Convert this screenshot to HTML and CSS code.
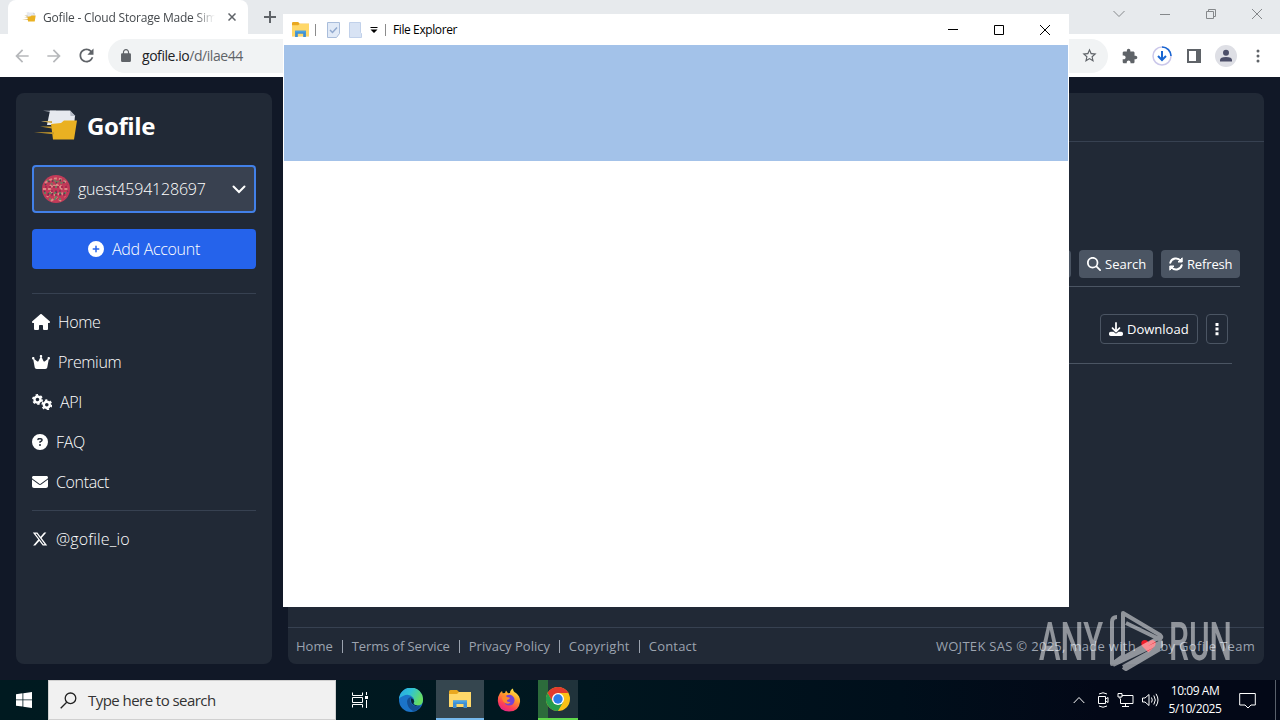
FILE: index.html
```html
<!DOCTYPE html>
<html lang="en">
<head>
    <meta charset="UTF-8">
    <meta name="viewport" content="width=device-width, initial-scale=1.0">
    <title>Gofile - Cloud Storage Made Simple</title>
    <link rel="stylesheet" href="styles.css">
</head>
<body>
    <svg class="defs" width="0" height="0">
        <symbol id="gofile" viewBox="0 0 44 30">
            <path d="M9 .8h13v1.600zM7 11.300h10v1.400z" fill="#d8dce4"/>
            <path d="M16 .500h20l5 5.500-1 9H13z" fill="#e6e9ef"/>
            <path d="M36 .500l5.500 5.500h-5z" fill="#b4bac5"/>
            <path d="M17 14l10-1 3-2.500h13l-3 19H19z" fill="#eab122"/>
            <path d="M6 16.500h12v2zM0 22.300h20v2zM7 11.300h11v1.800z" fill="#c99b2a"/>
        </symbol>
        <symbol id="folder" viewBox="0 0 22 18">
            <path d="M0 1.500Q0 0 1.500 0H8l2 2h12v15H0z" fill="#e9a820"/>
            <path d="M0 4h8l2-2h12v15H0z" fill="#ffd869"/>
            <path d="M4 10.500h14V18h-3.500v-4h-7v4H4z" fill="#3f8fd2"/>
            <path d="M4 10.500h14v2H4z" fill="#4aa3e4"/>
        </symbol>
    </svg>
    <div class="desktop">
        <div class="tab-strip">
            <div class="tab">
                <svg class="favicon" width="14" height="10"><use href="#gofile"/></svg>
                <span class="tab-title">Gofile - Cloud Storage Made Simple</span>
                <svg class="tab-close" width="8" height="8" viewBox="0 0 8 8"><path d="M.5.5l7 7m0-7l-7 7" stroke="#5f6368" stroke-width="1.500"/></svg>
            </div>
            <svg class="new-tab" width="12" height="12" viewBox="0 0 12 12"><path d="M6 0v12M0 6h12" stroke="#5f6368" stroke-width="2"/></svg>
            <div class="window-buttons">
                <svg width="12" height="12" viewBox="0 0 12 12"><path d="M.5 3L6 8.500 11.500 3"/></svg>
                <svg width="12" height="12" viewBox="0 0 12 12"><path d="M1 6.500h10"/></svg>
                <svg width="12" height="12" viewBox="0 0 12 12"><path d="M1.500 3.500h7v7h-7zM3.500 3V1.500h7v7H9"/></svg>
                <svg width="12" height="12" viewBox="0 0 12 12"><path d="M1 1l10 10m0-10L1 11"/></svg>
            </div>
        </div>
        <div class="toolbar">
            <svg class="nav-arrow" width="20" height="20" viewBox="0 0 24 24"><path d="M20 11H7.830l5.590-5.590L12 4l-8 8 8 8 1.410-1.410L7.830 13H20z"/></svg>
            <svg class="nav-arrow" width="20" height="20" viewBox="0 0 24 24"><path d="M4 11h12.170l-5.590-5.590L12 4l8 8-8 8-1.410-1.410L16.170 13H4z"/></svg>
            <svg class="reload" width="21" height="21" viewBox="0 0 24 24"><path d="M17.650 6.350C16.200 4.900 14.210 4 12 4c-4.420 0-7.990 3.580-7.990 8s3.570 8 7.990 8c3.730 0 6.840-2.550 7.730-6h-2.080c-.82 2.330-3.040 4-5.650 4-3.310 0-6-2.690-6-6s2.690-6 6-6c1.660 0 3.140.69 4.220 1.780L13 11h7V4l-2.350 2.350z"/></svg>
            <div class="omnibox">
                <svg width="12" height="13" viewBox="3 1 18 21"><path d="M18 8h-1V6c0-2.760-2.240-5-5-5S7 3.240 7 6v2H6c-1.100 0-2 .9-2 2v10c0 1.100.9 2 2 2h12c1.100 0 2-.9 2-2V10c0-1.100-.9-2-2-2zm-2.900 0H8.900V6c0-1.710 1.390-3.100 3.100-3.100s3.100 1.390 3.100 3.100z"/></svg>
                <span class="url"><b>gofile.io</b>/d/ilae44</span>
                <svg class="star" width="17" height="17" viewBox="0 0 24 24"><path d="M22 9.240l-7.190-.62L12 2 9.190 8.630 2 9.240l5.460 4.730L5.820 21 12 17.270 18.180 21l-1.630-7.030zM12 15.400l-3.760 2.270 1-4.280-3.320-2.880 4.380-.38L12 6.100l1.710 4.040 4.380.38-3.320 2.880 1 4.280z"/></svg>
            </div>
            <div class="actions">
                <svg width="16" height="16" viewBox="1 0 23 23"><path d="M20.500 11H19V7c0-1.100-.9-2-2-2h-4V3.500C13 2.120 11.880 1 10.500 1S8 2.120 8 3.500V5H4c-1.100 0-1.990.9-1.990 2v3.800H3.500c1.490 0 2.700 1.210 2.700 2.700s-1.210 2.700-2.700 2.700H2V20c0 1.100.9 2 2 2h3.800v-1.500c0-1.490 1.210-2.700 2.700-2.700s2.700 1.210 2.700 2.700V22H17c1.100 0 2-.9 2-2v-4h1.500c1.380 0 2.500-1.120 2.500-2.500S21.880 11 20.500 11z"/></svg>
                <svg width="20" height="20" viewBox="0 0 20 20" fill="none" stroke="#1967d2" stroke-width="2"><circle cx="10" cy="10" r="9" stroke="#cbc8ea" stroke-width="1.500"/><path d="M10 1a9 9 0 0 1 9 9" stroke-width="1.600"/><path d="M10 5v9M6 10l4 4 4-4"/></svg>
                <svg width="14" height="14" viewBox="0 0 14 14"><path d="M0 0h14v14H0zM2 2v10h7V2z" fill-rule="evenodd"/></svg>
                <svg width="22" height="22" viewBox="0 0 22 22"><circle cx="11" cy="11" r="11" fill="#dedfe5"/><circle cx="11" cy="7.800" r="3" fill="#4c4f69"/><path d="M5 16.500v-1.500q0-3 6-3t6 3v1.500z" fill="#4c4f69"/></svg>
                <svg width="4" height="14" viewBox="0 0 4 14"><circle cx="2" cy="2" r="1.500"/><circle cx="2" cy="7" r="1.500"/><circle cx="2" cy="12" r="1.500"/></svg>
            </div>
        </div>

        <div class="page">
            <aside class="sidebar">
                <div class="logo">
                    <svg width="44" height="30"><use href="#gofile"/></svg>
                    <span>Gofile</span>
                </div>
                <div class="account">
                    <svg width="28" height="28" viewBox="0 0 28 28">
                        <circle cx="14" cy="14" r="14" fill="#c23a58"/>
                        <g fill="none" stroke="#d98a84" stroke-width="2" stroke-dasharray="3 2"><path d="M3 8q11-9 22 0M1 14h7l6-5 6 5h7M5 22l4-5 5 4 5-4 4 5"/><path d="M8 10l3 3 3-4 3 4 3-3M9 26l5-4 5 4"/></g>
                        <g fill="none" stroke="#6d7f60" stroke-width="1.800" stroke-dasharray="2 3"><path d="M5 5l5 4 4-5 4 5 5-4M2 18h24M7 24h14"/><path d="M14 6v18"/></g>
                        <g fill="none" stroke="#a92a50" stroke-width="2" stroke-dasharray="2 2"><path d="M3 12h22M5 20h18M9 16h10"/></g>
                        <g fill="none" stroke="#4c4550" stroke-width="1.500" stroke-dasharray="1.500 3"><path d="M3 10l6-5 5 3 5-3 6 5M2 16l6 4 6-3 6 3 6-4"/></g>
                    </svg>
                    <span>guest4594128697</span>
                    <svg class="chevron" width="14" height="14" viewBox="0 0 14 14"><path d="M1.500 4.500L7 10l5.500-5.500" fill="none" stroke="#fff" stroke-width="2" stroke-linecap="round"/></svg>
                </div>
                <div class="add-account">
                    <svg width="16" height="16" viewBox="0 0 512 512"><path d="M256 512A256 256 0 1 0 256 0a256 256 0 1 0 0 512zM232 344V280H168c-13.300 0-24-10.700-24-24s10.700-24 24-24h64V168c0-13.300 10.700-24 24-24s24 10.700 24 24v64h64c13.300 0 24 10.700 24 24s-10.700 24-24 24H280v64c0 13.300-10.700 24-24 24s-24-10.700-24-24z"/></svg>
                    <span>Add Account</span>
                </div>
                <nav class="menu">
                    <a><svg width="18" height="16" viewBox="0 0 576 512"><path d="M575.800 255.500c0 18-15 32.100-32 32.100h-32l.7 160.200V472c0 22.100-17.900 40-40 40H392c-22.100 0-40-17.900-40-40V384c0-17.700-14.300-32-32-32H256c-17.700 0-32 14.300-32 32v88c0 22.100-17.900 40-40 40H104c-22.100 0-40-17.900-40-40V287.600H32c-18 0-32-14-32-32.100c0-9 3-17 10-24L266.400 8c7-7 15-8 22-8s15 2 21 7L564.800 231.500c8 7 12 15 11 24z"/></svg><span>Home</span></a>
                    <a><svg width="18" height="16" viewBox="0 0 576 512"><path d="M309 106c11.400-7 19-19.700 19-34c0-22.100-17.900-40-40-40s-40 17.900-40 40c0 14.400 7.600 27 19 34L209.700 220.600c-9.100 18.200-32.700 23.400-48.600 10.700L72 160c5-6.700 8-15 8-24c0-22.100-17.900-40-40-40S0 113.900 0 136s17.900 40 40 40h.7L86.400 427.400c5.500 30.400 32 52.600 63 52.600H426.600c30.900 0 57.400-22.100 63-52.600L535.300 176h.7c22.100 0 40-17.900 40-40s-17.900-40-40-40s-40 17.900-40 40c0 9 3 17.300 8 24l-89.100 71.300c-15.900 12.700-39.500 7.500-48.600-10.700z"/></svg><span>Premium</span></a>
                    <a><svg width="20" height="16" viewBox="0 0 20 16"><g fill="none" stroke="#fff"><circle cx="5.500" cy="5.500" r="3" stroke-width="2.400"/><circle cx="5.500" cy="5.500" r="4.600" stroke-width="1.700" stroke-dasharray="2.400 2.417"/><circle cx="14.800" cy="10.800" r="3" stroke-width="2.400"/><circle cx="14.800" cy="10.800" r="4.600" stroke-width="1.700" stroke-dasharray="2.400 2.417"/></g></svg><span>API</span></a>
                    <a><svg width="16" height="16" viewBox="0 0 512 512"><path d="M256 512A256 256 0 1 0 256 0a256 256 0 1 0 0 512zM169.800 165.300c7.900-22.300 29.100-37.300 52.800-37.300h58.300c34.900 0 63.100 28.300 63.100 63.100c0 22.600-12.100 43.500-31.700 54.800L280 264.400c-.2 13-10.900 23.600-24 23.600c-13.300 0-24-10.700-24-24V250.500c0-8.600 4.600-16.500 12.100-20.800l44.300-25.400c4.700-2.700 7.600-7.700 7.600-13.100c0-8.400-6.800-15.100-15.100-15.100H222.600c-3.400 0-6.400 2.100-7.500 5.300l-.4 1.200c-4.400 12.500-18.200 19-30.600 14.600s-19-18.200-14.600-30.600zM224 352a32 32 0 1 1 64 0 32 32 0 1 1 -64 0z"/></svg><span>FAQ</span></a>
                    <a><svg width="16" height="16" viewBox="0 0 512 512"><path d="M48 64C21.500 64 0 85.500 0 112c0 15.100 7.100 29.300 19.200 38.400L236.800 313.600c11.400 8.500 27 8.500 38.400 0L492.800 150.400c12.100-9.100 19.200-23.300 19.200-38.400c0-26.500-21.500-48-48-48zM0 176V384c0 35.300 28.700 64 64 64H448c35.300 0 64-28.700 64-64V176L294.400 339.200c-22.800 17.100-54 17.100-76.800 0z"/></svg><span>Contact</span></a>
                </nav>
                <a class="social"><svg width="16" height="16" viewBox="0 0 512 512"><path d="M389.200 48h70.600L305.600 224.200 487 464H345L233.700 318.600 106.500 464H35.800L200.700 275.500 26.800 48H172.400L272.900 180.900zM364.400 421.800h39.100L151.100 88h-42z"/></svg><span>@gofile_io</span></a>
            </aside>

            <main class="content">
                <div class="content-header"></div>
                <div class="files">
                    <div class="file-actions">
                        <button class="btn"></button>
                        <button class="btn search-btn"><svg width="14" height="14" viewBox="0 0 512 512"><path d="M416 208c0 45.900-14.900 88.300-40 122.700L502.600 457.400c12.500 12.500 12.500 32.800 0 45.300s-32.800 12.500-45.300 0L330.700 376c-34.400 25.200-76.800 40-122.700 40C93.100 416 0 322.900 0 208S93.100 0 208 0S416 93.100 416 208zM208 352a144 144 0 1 0 0-288 144 144 0 1 0 0 288z"/></svg><span>Search</span></button>
                        <button class="btn refresh-btn"><svg width="14" height="14" viewBox="0 0 14 14"><g fill="none" stroke="#fff" stroke-width="1.900" stroke-linecap="round" stroke-linejoin="round"><path d="M1.300 5.800A5.800 5.800 0 0 1 11.700 4M12.700 8.200A5.800 5.800 0 0 1 2.300 10"/><path d="M13.200 1.200V5H9.400zM.8 12.800V9h3.800z" fill="#fff" stroke-width="1"/></g></svg><span>Refresh</span></button>
                    </div>
                    <div class="file-row">
                        <button class="btn outline download-btn"><svg width="14" height="14" viewBox="0 0 512 512"><path d="M288 32c0-17.700-14.300-32-32-32s-32 14.300-32 32V274.700l-73.400-73.400c-12.500-12.500-32.800-12.500-45.300 0s-12.500 32.800 0 45.300l128 128c12.500 12.500 32.800 12.500 45.300 0l128-128c12.500-12.500 12.500-32.800 0-45.300s-32.800-12.500-45.300 0L288 274.700zM64 352c-35.300 0-64 28.700-64 64v32c0 35.300 28.700 64 64 64H448c35.300 0 64-28.700 64-64V416c0-35.300-28.700-64-64-64H346.500l-45.300 45.300c-25 25-65.500 25-90.500 0L165.500 352z"/></svg><span>Download</span></button>
                        <button class="btn outline more-btn"><svg width="4" height="14" viewBox="0 0 4 14"><path d="M.5 1h3v3h-3zM.5 5.600h3v3h-3zM.5 10.200h3v3h-3z"/></svg></button>
                    </div>
                </div>
                <footer class="footer">
                    <span class="f-home">Home</span><i></i><span class="f-terms">Terms of Service</span><i></i><span class="f-privacy">Privacy Policy</span><i></i><span class="f-copy">Copyright</span><i></i><span>Contact</span>
                    <span class="credits">WOJTEK SAS © 2025, made with <svg width="17" height="14" viewBox="0 0 16 14"><path d="M8 13.500L1.500 7Q-.5 2.500 3 1.200 6.500.500 8 3.500 10 .500 13 1.200q3.500 1.300 1.500 5.800z" fill="#f01c28"/></svg> by Gofile Team</span>
                </footer>
            </main>
        </div>

        <div class="taskbar">
            <div class="start"><svg width="16" height="16" viewBox="0 0 16 16"><path d="M0 2.200L6.500 1.300v6.200H0zM7.300 1.200L16 0v7.500H7.300zM0 8.300h6.500v6.300L0 13.700zM7.300 8.300H16V16l-8.700-1.200z" fill="#fff"/></svg></div>
            <div class="search-box">
                <svg width="17" height="17" viewBox="0 0 17 17"><g fill="none" stroke="#222" stroke-width="1.300"><circle cx="10.500" cy="6.300" r="5.300"/><path d="M6.700 10.200L.7 16.200"/></g></svg>
                <span>Type here to search</span>
            </div>
            <div class="task"><svg width="18" height="16" viewBox="0 0 18 16"><path d="M1.500.5v3h10v-3M1.500 15.500v-3h10v3M1.500 5.500h10v5h-10zM15.500 0v3M15.500 8v8" fill="none" stroke="#fff"/><path d="M14 4h3v3h-3z" fill="#fff"/></svg></div>
            <div class="task edge"><svg width="24" height="24" viewBox="0 0 24 24">
                <defs><linearGradient id="eg" x1="0" y1="0" x2="1" y2=".4"><stop offset="0" stop-color="#2aa4e4"/><stop offset=".5" stop-color="#2fc3d6"/><stop offset="1" stop-color="#66dd62"/></linearGradient></defs>
                <circle cx="12" cy="12" r="12" fill="#1b74c9"/>
                <path d="M0 11A12 12 0 0 1 24 12q0 5-5 5.500-5 0-4.500-3Q16 12 14 9.500 10 5 4 8 1 9 0 11z" fill="url(#eg)"/>
                <path d="M8 13q1-4 5-4-3 2-1 6 3 5 10 2.500Q19 23 14 23q-6-3-6-10z" fill="#144f93"/>
                <path d="M12.500 10q-1.500 2 0 5 3 4 8.500 2.800-5 0-6.500-2 0-1 .8-2 0-2.500-2.800-3.800z" fill="#072537"/>
            </svg></div>
            <div class="task active"><svg width="22" height="18"><use href="#folder"/></svg></div>
            <div class="task firefox"><svg width="24" height="24" viewBox="0 0 24 24">
                <defs><linearGradient id="ff" x1=".8" y1="0" x2=".3" y2="1"><stop offset="0" stop-color="#fff14a"/><stop offset=".4" stop-color="#ff9a29"/><stop offset=".75" stop-color="#ff4055"/><stop offset="1" stop-color="#e3248a"/></linearGradient></defs>
                <path d="M3 5l2-2 .7 2.300L8 5l1-2.500 2 2.700 2-.2Q13 2 16 .500q0 3 3 4.500 4.500 3.500 4 9Q22 23.500 12 23.500 1.500 23 .8 13 .8 8 3 5z" fill="url(#ff)"/>
                <path d="M8 9q2-3 6-2 4 2 3.500 6-1 4.500-5.500 4.500-4 0-5-4.500z" fill="#7542d5"/>
                <path d="M5 9q3-2.500 5 0l3 .8q-.5 2-3 2.200-.5 2.500 3.500 2-1.500 3-5.500 1Q5 13 5 9z" fill="#ff8a2b"/>
            </svg></div>
            <div class="task chrome"><svg width="24" height="24" viewBox="0 0 24 24">
                <circle cx="12" cy="12" r="12" fill="#fbc116"/>
                <path d="M1.600 6A12 12 0 0 1 22.400 6H12L6.800 15z" fill="#e33b2e"/>
                <path d="M1.600 6A12 12 0 0 0 12 24l5.200-9H6.800z" fill="#269c4b"/>
                <circle cx="12" cy="12" r="6" fill="#fff"/><circle cx="12" cy="12" r="4.700" fill="#2b7de9"/>
            </svg></div>
            <div class="tray">
                <svg width="12" height="8" viewBox="0 0 12 8"><path d="M.7 7L6 1.500 11.300 7"/></svg>
                <svg width="12" height="16" viewBox="0 0 12 16"><path d="M1.500 4.500h7v7h-7zM8.500 7l2.500-1.500v5L8.500 9M2 2q4-2.500 8 0M2 14q4 2.500 8 0"/></svg>
                <svg width="17" height="14" viewBox="0 0 17 14"><path d="M5 2.500h11v8H3.500V6M8.500 10.500v3M5 13.500h7M1 .5h4v3.500H1zM3 4v2"/></svg>
                <svg width="17" height="14" viewBox="0 0 17 14"><path d="M.5 5v4h2.500L7 12.500v-11L3 5zM9.500 4.500q1.500 2.500 0 5M11.800 2.500q3 4.500 0 9M14 .8q4 6.200 0 12.400"/></svg>
                <div class="clock"><span>10:09 AM</span><span>5/10/2025</span></div>
                <svg class="notice" width="17" height="17" viewBox="0 0 17 17"><path d="M.7 1.500h15.600v11.500h-4.300L9 16l-3-3H.7z"/></svg>
            </div>
        </div>

        <div class="explorer">
            <div class="titlebar">
                <svg class="ex-folder" width="17" height="15" viewBox="0 0 22 18" preserveAspectRatio="none"><use href="#folder"/></svg>
                <span class="sep"></span>
                <svg class="ex-check" width="13" height="16" viewBox="0 0 13 16"><path d="M.5.5h12v11l-3 4h-9z" fill="#e1eaf7" stroke="#a9bddb"/><path d="M3 8l2.500 2.500L10 5.500" fill="none" stroke="#91a9cf" stroke-width="1.500"/></svg>
                <svg class="ex-page" width="13" height="16" viewBox="0 0 13 16"><path d="M.5.5h11v10l1 1v4H.5z" fill="#d8e3f4" stroke="#c1d1ea"/></svg>
                <svg class="ex-drop" width="8" height="6" viewBox="0 0 8 6"><path d="M.5 0h7v1h-7zM.5 2.500h7L4 6z"/></svg>
                <span class="sep"></span>
                <span class="ex-title">File Explorer</span>
                <div class="ex-buttons">
                    <svg width="10" height="10" viewBox="0 0 10 10"><path d="M0 4.500h10"/></svg>
                    <svg width="10" height="10" viewBox="0 0 10 10"><path d="M.5.5h9v9h-9z"/></svg>
                    <svg width="10" height="10" viewBox="0 0 10 10"><path d="M0 0l10 10M10 0L0 10"/></svg>
                </div>
            </div>
            <div class="ribbon"></div>
        </div>

        <svg class="watermark" width="194" height="64" viewBox="0 0 194 64">
            <text x="0" y="50.500" textLength="64" lengthAdjust="spacingAndGlyphs">ANY</text>
            <text x="130" y="50.500" textLength="63" lengthAdjust="spacingAndGlyphs">RUN</text>
            <g fill="none" stroke="#fff" stroke-width="4" stroke-linejoin="round">
                <path d="M78 8q-5 0-5 5v42l11-8V4l37 22q3 3-1 4L87 14"/>
                <path d="M73 55l48-27M84 58l38-21v-4L74 56M84 58l3 2 34-20"/>
            </g>
        </svg>
    </div>
</body>
</html>
```
FILE: styles.css
```css
* { box-sizing: border-box; }
body { margin: 0; font-family: "Open Sans", "Noto Sans", sans-serif; font-size: 16px; color: #fff; overflow: hidden; }
svg { flex: none; display: block; }
.defs { position: absolute; }
.desktop { position: relative; width: 1280px; height: 720px; display: flex; flex-direction: column; overflow: hidden; background: #111827; }

/* browser frame */
.tab-strip { height: 34px; flex: none; background: #e7eaed; display: flex; align-items: center; }
.tab { width: 240px; height: 34px; margin-left: 8px; padding: 0 11px 0 14px; border-radius: 8px 8px 0 0; background: #fff; display: flex; align-items: center; }
.tab-title { width: 172px; margin-left: 7px; font-size: 12px; letter-spacing: -0.2px; color: #45494d; white-space: nowrap; overflow: hidden; mask-image: linear-gradient(90deg, #000 88%, transparent); }
.tab-close { margin-left: 13px; }
.new-tab { margin-left: 16px; }
.window-buttons { margin-left: auto; margin-right: 17px; padding-bottom: 6px; display: flex; gap: 34px; fill: none; stroke: #85888b; }
.toolbar { height: 43px; flex: none; padding-left: 12px; background: #fff; display: flex; align-items: center; fill: #5f6368; }
.nav-arrow { margin-right: 12px; fill: #b6b8bb; }
.reload { margin-right: 11px; }
.omnibox { width: 1000px; height: 34px; padding: 0 10px 0 12px; border-radius: 17px; background: #f1f3f4; display: flex; align-items: center; }
.url { margin-left: 10px; font-size: 14px; letter-spacing: -0.45px; color: #5f6368; }
.url b { font-weight: 400; color: #202124; }
.star { margin-left: auto; }
.actions { margin-left: auto; padding-right: 20px; display: flex; align-items: center; }
.actions svg:nth-child(2) { margin-left: 14px; }
.actions svg:nth-child(3) { margin-left: 15px; }
.actions svg:nth-child(4) { margin-left: 14px; }
.actions svg:nth-child(5) { margin-left: 19px; }

/* gofile page */
.page { height: 603px; flex: none; padding: 16px; background: #111827; display: flex; gap: 16px; fill: #fff; }
.sidebar { width: 256px; padding: 16px; border-radius: 8px; background: #212936; font-weight: 300; }
.logo { height: 32px; display: flex; align-items: center; font-size: 24px; font-weight: 700; letter-spacing: -0.4px; }
.logo svg { margin-left: 2px; margin-right: 9px; }
.account { height: 48px; margin-top: 24px; padding: 0 8px; border: 2px solid #4280e8; border-radius: 4px; background: #394150; display: flex; align-items: center; }
.account span { margin-left: 8px; letter-spacing: -0.2px; }
.chevron { margin-left: auto; }
.add-account { height: 40px; margin-top: 16px; border-radius: 4px; background: #2563eb; display: flex; align-items: center; justify-content: center; gap: 8px; letter-spacing: -0.3px; }
.menu { margin-top: 24px; padding: 8px 0; border: solid #374151; border-width: 1px 0; letter-spacing: -0.35px; }
.menu a, .social { height: 40px; display: flex; align-items: center; gap: 8px; }
.social { margin-top: 8px; letter-spacing: 0.15px; }
.content { width: 976px; border-radius: 8px; background: #212936; display: flex; flex-direction: column; }
.content-header { height: 49px; flex: none; border-bottom: 1px solid #374151; }
.files { flex: 1; padding: 108px 24px 0; }
.file-actions { height: 37px; display: flex; justify-content: flex-end; gap: 8px; border-bottom: 1px solid #4b5563; }
.btn { height: 28px; padding: 0 8px; border: 0; border-radius: 4px; background: #4b5563; color: #fff; fill: #fff; font: 13px "Open Sans", sans-serif; display: flex; align-items: center; gap: 4px; }
.search-btn { width: 74px; }
.refresh-btn { width: 79px; }
.refresh-btn span { letter-spacing: -0.15px; }
.file-row { height: 77px; margin-right: 8px; padding: 27px 4px 0 0; display: flex; justify-content: flex-end; gap: 8px; border-bottom: 1px solid #4b5563; }
.outline { height: 30px; border: 1px solid #4b5563; background: transparent; }
.download-btn { width: 98px; }
.more-btn { width: 22px; justify-content: center; }
.footer { height: 37px; padding: 0 9px 0 8px; border-top: 1px solid #374151; display: flex; align-items: center; font-size: 13px; color: #9ca3af; white-space: nowrap; }
.footer i { width: 1px; height: 13px; margin: 0 9px; background: #9ca3af; }
.f-terms { width: 98px; letter-spacing: -0.13px; }
.f-privacy { width: 81px; }
.f-copy { width: 61px; letter-spacing: 0.25px; }
.footer span:nth-of-type(5) { letter-spacing: 0.2px; }
.credits { margin-left: auto; letter-spacing: 0.3px; }
.credits svg { display: inline-block; vertical-align: -2px; }

/* taskbar */
.taskbar { height: 40px; flex: none; background: linear-gradient(90deg, #001a20 0, #001820 500px, #000f1b 900px, #030817 1100px); display: flex; }
.start { width: 48px; display: flex; align-items: center; justify-content: center; }
.search-box { width: 288px; padding-left: 11px; border: 1px solid #d0d0d0; background: #f1f1f1; color: #333; display: flex; align-items: center; font-size: 15px; }
.search-box span { margin-left: 11px; letter-spacing: -0.55px; }
.task { width: 48px; height: 40px; display: flex; align-items: center; justify-content: center; }
.edge { width: 52px; padding-left: 2px; }
.active { background: #35464f; border-bottom: 2px solid #76b9ed; }
.firefox { width: 50px; }
.chrome { width: 40px; margin-left: 4px; background: linear-gradient(90deg, #2c6b3b 10px, #20333b 10px); border-bottom: 2px solid #5fd74a; }
.tray { margin-left: auto; width: 203px; margin-right: 4px; border-right: 1px solid #59606b; display: flex; align-items: center; fill: none; stroke: #fff; }
.tray > svg { margin-right: 8px; }
.tray > svg:first-child { margin-right: 12px; }
.clock { width: 56px; display: flex; flex-direction: column; align-items: center; font-size: 12px; line-height: 18px; letter-spacing: -0.45px; stroke: none; white-space: nowrap; }
.tray > .notice { margin: 0 0 0 16px; }

/* explorer window */
.explorer { position: absolute; left: 283px; top: 14px; width: 786px; height: 593px; padding: 0 1px; background: #fff; }
.titlebar { height: 31px; padding-left: 8px; display: flex; align-items: center; color: #000; }
.sep { width: 1px; height: 12px; background: #8c8c8c; }
.ex-folder { margin-right: 6px; }
.ex-check { margin-left: 11px; }
.ex-page { margin-left: 9px; margin-right: 8px; }
.ex-drop { margin-right: 7px; }
.ex-title { margin-left: 7px; font-size: 12px; letter-spacing: -0.4px; }
.ex-buttons { margin-left: auto; margin-right: 18px; display: flex; gap: 36px; fill: none; stroke: #000; }
.ribbon { height: 116px; background: #a3c2e9; }

.watermark { position: absolute; left: 1039px; top: 609px; opacity: 0.5; fill: #fff; font: 500 54px Roboto, sans-serif; }
```
